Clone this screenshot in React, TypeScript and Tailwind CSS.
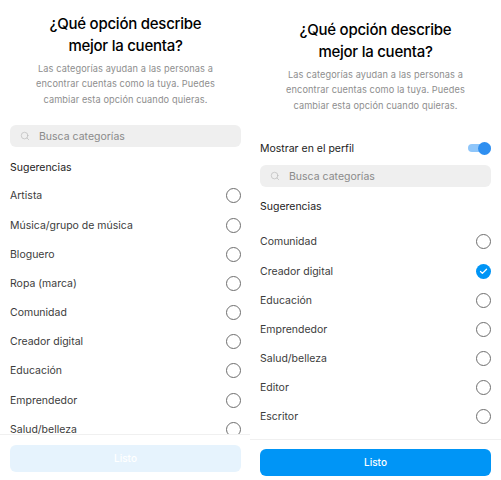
import { Check, Search } from 'lucide-react';

const leftItems = [
  'Artista',
  'Música/grupo de música',
  'Bloguero',
  'Ropa (marca)',
  'Comunidad',
  'Creador digital',
  'Educación',
  'Emprendedor',
  'Salud/belleza',
];

// last one is only a sliver of its circle above the footer
const rightItems = [
  'Comunidad',
  'Creador digital',
  'Educación',
  'Emprendedor',
  'Salud/belleza',
  'Editor',
  'Escritor',
  '',
];

function Header() {
  return (
    <div className="flex flex-col items-center">
      <h1 className="text-center text-[15px] leading-[21.5px] font-medium tracking-[-0.25px] text-black">
        ¿Qué opción describe
        <br />
        mejor la cuenta?
      </h1>
      <p className="mt-[5px] text-center text-[9.2px] leading-[15.4px] tracking-[0.1px] text-[#8e8e8e]">
        Las categorías ayudan a las personas a
        <br />
        encontrar cuentas como la tuya. Puedes
        <br />
        cambiar esta opción cuando quieras.
      </p>
    </div>
  );
}

function SearchBox() {
  return (
    <div className="flex h-[22px] items-center rounded-[6px] bg-[#efefef] pl-[10px]">
      <Search className="h-[10px] w-[10px] text-[#b5b5b5]" strokeWidth={1.5} />
      <span className="ml-[9px] pt-[1px] text-[10.5px] text-[#8a8a8a]">Busca categorías</span>
    </div>
  );
}

function Row({ label, selected }: { label: string; selected?: boolean }) {
  return (
    <div className="flex h-[29.2px] shrink-0 items-center justify-between">
      <span className="pt-[1px] text-[10.5px] leading-[14px] text-[#3c3c3c]">{label}</span>
      {selected ? (
        <span className="flex h-[15px] w-[15px] items-center justify-center rounded-full bg-[#0095f6]">
          <Check className="h-[9px] w-[9px] text-white" strokeWidth={3.5} />
        </span>
      ) : (
        <span className="h-[15px] w-[15px] rounded-full border-[1.25px] border-[#6e6e6e]" />
      )}
    </div>
  );
}

export default function App() {
  return (
    <div className="flex h-[480px] w-[501px] overflow-hidden bg-white font-['Inter',sans-serif]">
      <div className="flex h-full w-[250px] shrink-0 flex-col">
        <div className="pt-[13px] pr-[9px] pl-[10px]">
          <Header />
          <div className="mt-[18px]">
            <SearchBox />
          </div>
          <div className="mt-[13px] text-[10.5px] leading-[16px] text-[#1c1c1c]">Sugerencias</div>
        </div>
        <div className="mt-[5px] flex h-[253px] flex-col overflow-hidden pr-[9px] pl-[10px]">
          {leftItems.map((item) => (
            <Row key={item} label={item} />
          ))}
        </div>
        <div className="border-t border-[#f0f0f0] pt-[10px] pr-[9px] pl-[10px]">
          <button
            type="button"
            className="flex h-[26.5px] w-full items-center justify-center rounded-[6px] bg-[#e6f3fd] text-[10px] font-medium text-white"
          >
            Listo
          </button>
        </div>
      </div>
      <div className="flex h-full w-[251px] shrink-0 flex-col">
        <div className="px-[10px] pt-[19px]">
          <Header />
          <div className="mt-[25px] flex h-[20px] items-center justify-between">
            <span className="pt-[1px] text-[10.5px] text-[#1c1c1c]">Mostrar en el perfil</span>
            <span className="relative h-[8px] w-[23px] rounded-full bg-[#8fc6fa]">
              <span className="absolute top-[-2.5px] right-0 h-[13px] w-[13px] rounded-full bg-[#2f8ff0]" />
            </span>
          </div>
          <div className="mt-[7px]">
            <SearchBox />
          </div>
          <div className="mt-[12px] text-[10.5px] leading-[16px] text-[#1c1c1c]">Sugerencias</div>
        </div>
        <div className="mt-[12px] flex h-[212px] flex-col overflow-hidden px-[10px]">
          {rightItems.map((item) => (
            <Row key={item} label={item} selected={item === 'Creador digital'} />
          ))}
        </div>
        <div className="border-t border-[#f0f0f0] px-[10px] pt-[9px]">
          <button
            type="button"
            className="flex h-[27px] w-full items-center justify-center rounded-[6px] bg-[#0095f6] text-[10px] font-medium text-white"
          >
            Listo
          </button>
        </div>
      </div>
    </div>
  );
}
